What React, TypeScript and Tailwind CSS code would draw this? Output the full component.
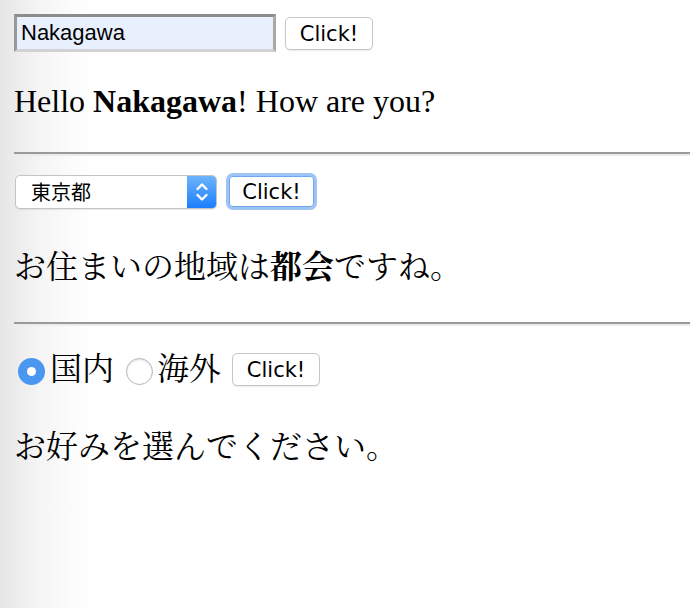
import React from "react";

const serif = "font-['Liberation_Serif','Noto_Serif_CJK_JP','Noto_Sans_CJK_JP',serif]";

function Btn({ focused = false }: { focused?: boolean }) {
  if (focused) {
    return (
      <div className="flex h-[37px] w-[91px] items-center justify-center rounded-[7px] border-[3px] border-[#9ec4f4] bg-white pt-[2px] shadow-[inset_0_0_0_1px_#6fa6ec]">
        <span className="font-['DejaVu_Sans',sans-serif] text-[21px] leading-none text-black">Click!</span>
      </div>
    );
  }
  return (
    <div className="flex h-[33px] w-[88px] items-center justify-center rounded-[5px] border border-[#c6c6c6] bg-white pt-[2px] shadow-[0_1px_1px_rgba(0,0,0,0.08)]">
      <span className="font-['DejaVu_Sans',sans-serif] text-[21px] leading-none text-black">Click!</span>
    </div>
  );
}

function Radio({ checked }: { checked: boolean }) {
  if (checked) {
    return (
      <div className="flex h-[27px] w-[27px] items-center justify-center rounded-full bg-[#4a97f0]">
        <div className="h-[9px] w-[9px] rounded-full bg-white" />
      </div>
    );
  }
  return (
    <div className="h-[27px] w-[27px] rounded-full border border-[#b5b5b5] bg-white shadow-[inset_0_1px_2px_rgba(0,0,0,0.12)]" />
  );
}

function Hr({ className = "" }: { className?: string }) {
  return (
    <div className={"w-full " + className}>
      <div className="h-[2px] w-full bg-[#9a9a9a]" />
      <div className="h-[2px] w-full bg-[#ececec]" />
    </div>
  );
}

export default function App() {
  return (
    <div className="h-[608px] w-[690px] overflow-hidden bg-[linear-gradient(to_right,#e6e6e6,#f5f5f5_40px,#ffffff_90px)] pl-[14px] pt-[14px] text-black">
      {/* Row 1 */}
      <div className="flex items-center gap-[9px]">
        <div className="flex h-[38px] w-[262px] items-center border-[3px] border-t-[#8c8c8c] border-l-[#979797] border-r-[#a9a9a9] border-b-[#d2d2d2] bg-[#e8f0fe] pl-[4px]">
          <span className="font-['Liberation_Sans',Arial,sans-serif] text-[22px] leading-none">Nakagawa</span>
        </div>
        <Btn />
      </div>

      <p className={serif + " mt-[31px] text-[32px] leading-[36px]"}>
        Hello <b>Nakagawa</b>! How are you?
      </p>

      <Hr className="mt-[33px]" />

      {/* Row 2 */}
      <div className="mt-[17px] flex items-center gap-[9px]">
        <div className="ml-[1px] flex h-[34px] w-[202px] overflow-hidden rounded-[5px] border border-[#c4c4c4] bg-white shadow-[0_1px_1px_rgba(0,0,0,0.08)]">
          <div className="flex flex-1 items-center pl-[15px]">
            <span className="font-['Noto_Sans_CJK_JP',sans-serif] text-[20px] leading-none">東京都</span>
          </div>
          <div className="flex w-[29px] items-center justify-center bg-[linear-gradient(to_bottom,#6db3fb,#1b7ffb)]">
            <svg width="14" height="22" viewBox="0 0 14 22" fill="none" stroke="white" strokeWidth="2.4" strokeLinecap="round" strokeLinejoin="round">
              <path d="M2.5 8 L7 3.5 L11.5 8" />
              <path d="M2.5 14 L7 18.5 L11.5 14" />
            </svg>
          </div>
        </div>
        <Btn focused />
      </div>

      <p className={serif + " mt-[39px] text-[32px] leading-[36px]"}>
        お住まいの地域は<b>都会</b>ですね。
      </p>

      <Hr className="mt-[37px]" />

      {/* Row 3 */}
      <div className="mt-[24px] flex h-[38px] items-center">
        <div className="ml-[4px] mt-[4px]">
          <Radio checked />
        </div>
        <span className={serif + " ml-[5px] text-[32px] leading-[36px]"}>国内</span>
        <div className="ml-[12px] mt-[4px]">
          <Radio checked={false} />
        </div>
        <span className={serif + " ml-[4px] text-[32px] leading-[36px]"}>海外</span>
        <div className="ml-[11px]">
          <Btn />
        </div>
      </div>

      <p className={serif + " mt-[41px] text-[32px] leading-[36px]"}>
        お好みを選んでください。
      </p>
    </div>
  );
}
